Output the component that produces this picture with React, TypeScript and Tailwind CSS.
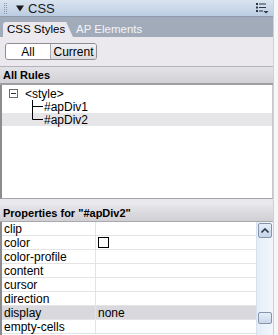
import React from 'react'

const props = [
  { name: 'clip', value: '' },
  { name: 'color', value: 'swatch' },
  { name: 'color-profile', value: '' },
  { name: 'content', value: '' },
  { name: 'cursor', value: '' },
  { name: 'direction', value: '' },
  { name: 'display', value: 'none', selected: true },
  { name: 'empty-cells', value: '' },
]

const Grip = () => (
  <svg width="4" height="11" viewBox="0 0 4 11" className="shrink-0">
    {[0, 2, 4, 6, 8, 10].map(y => (
      <g key={y}>
        <rect x="0" y={y} width="1" height="1" fill="#8a97a8" />
        <rect x="2" y={y} width="1" height="1" fill="#8a97a8" />
      </g>
    ))}
  </svg>
)

const OptionsIcon = () => (
  <svg width="13" height="11" viewBox="0 0 13 11">
    <rect x="0" y="0" width="2" height="2" fill="#2b3544" />
    <rect x="3" y="0.5" width="7" height="1" fill="#2b3544" />
    <rect x="0" y="3.5" width="2" height="2" fill="#2b3544" />
    <rect x="3" y="4" width="7" height="1" fill="#2b3544" />
    <rect x="0" y="7" width="2" height="2" fill="#2b3544" />
    <rect x="3" y="7.5" width="4" height="1" fill="#2b3544" />
    <path d="M7.5 8 L12.5 8 L10 10.5 Z" fill="#2b3544" />
  </svg>
)

export default function App() {
  return (
    <div className="w-[278px] h-[335px] bg-white flex overflow-hidden font-['Liberation_Sans',sans-serif] text-[11px] text-black leading-none whitespace-nowrap">
      <div className="w-[273px] flex flex-col">
        {/* panel title */}
        <div className="h-[17px] shrink-0 flex items-center pl-[4px] pr-[4px] bg-gradient-to-b from-[#dae4f0] to-[#bccde2] border-b border-[#8e9bae]">
          <Grip />
          <svg width="8" height="7" viewBox="0 0 8 7" className="ml-[8px] shrink-0">
            <path d="M0 0.5 H8 L4 6.5 Z" fill="#1a1a1a" />
          </svg>
          <span className="ml-[4px] text-[13px] text-[#1a1a1a]">CSS</span>
          <div className="ml-auto mt-[1px]"><OptionsIcon /></div>
        </div>

        {/* tabs */}
        <div className="h-[20px] shrink-0 flex items-end bg-[#a1abba] pl-[3px]">
          <div className="h-[15px] w-[63px] shrink-0 flex items-center pl-[4px] bg-[#ebe9ed] rounded-tl-[3px] text-[11.5px] relative">
            CSS Styles
            <div className="absolute right-[-7px] top-0 h-full w-[8px] bg-[#ebe9ed] [clip-path:polygon(0_0,15%_0,100%_100%,0_100%)]" />
          </div>
          <div className="h-[15px] ml-[10px] flex items-center text-[11.5px] text-[#f4f4f6]">AP Elements</div>
        </div>

        {/* All / Current */}
        <div className="h-[30px] shrink-0 flex items-center px-[5px] bg-[#ebe9ed] border-b border-[#b4b3b8]">
          <div className="flex h-[17px] border border-[#8d8d92] rounded-[3px] overflow-hidden text-[12px]">
            <div className="w-[45px] flex items-center justify-center bg-white border-r border-[#a8a8ac]">All</div>
            <div className="w-[45px] flex items-center justify-center bg-gradient-to-b from-[#f1f0f2] to-[#dcdbde]">Current</div>
          </div>
        </div>

        {/* All Rules header */}
        <div className="h-[18px] shrink-0 flex items-center pl-[3px] font-bold bg-gradient-to-b from-[#e3e2e6] to-[#d2d1d5] border-b-2 border-[#9e9ea3]">
          All Rules
        </div>

        {/* rules tree */}
        <div className="h-[114px] shrink-0 bg-white border-l-2 border-r border-b border-l-[#8c8c90] border-r-[#c8c8cc] border-b-[#a6a6aa] pt-[2px] text-[12px]">
          <div className="h-[13px] flex items-center pl-[7px]">
            <div className="w-[9px] h-[9px] border border-[#6e6e6e] flex items-center justify-center">
              <div className="w-[5px] h-[1px] bg-[#333]" />
            </div>
            <span className="ml-[7px]">&lt;style&gt;</span>
          </div>
          <div className="h-[13px] flex items-center pl-[30px]">
            <svg width="12" height="13" viewBox="0 0 12 13" className="shrink-0">
              <path d="M0.5 0 V13 M0.5 6.5 H11" stroke="#000" strokeWidth="1" />
            </svg>
            <span>#apDiv1</span>
          </div>
          <div className="h-[13px] flex items-center pl-[30px] bg-[#e6e6e8]">
            <svg width="12" height="13" viewBox="0 0 12 13" className="shrink-0">
              <path d="M0.5 0 V6.5 H11" stroke="#000" strokeWidth="1" fill="none" />
            </svg>
            <span>#apDiv2</span>
          </div>
        </div>

        <div className="h-[6px] shrink-0 bg-[#e9e8ec]" />

        {/* Properties header */}
        <div className="h-[17px] shrink-0 flex items-center pl-[3px] font-bold bg-gradient-to-b from-[#e6e5e9] to-[#d0cfd3] border-b border-[#a9a9ad]">
          Properties for "#apDiv2"
        </div>

        {/* property grid */}
        <div className="flex-1 flex border-l-2 border-[#8c8c90] overflow-hidden">
          <div className="flex-1 flex flex-col text-[12px]">
            {props.map(p => (
              <div key={p.name} className={`h-[14px] shrink-0 flex border-b border-[#e4e4e6] ${p.selected ? 'bg-[#d9d8dc]' : 'bg-white'}`}>
                <div className="w-[94px] pl-[2px] flex items-center border-r border-[#e4e4e6]">{p.name}</div>
                <div className="flex-1 pl-[2px] flex items-center">
                  {p.value === 'swatch' ? (
                    <div className="w-[11px] h-[11px] border border-black bg-white" />
                  ) : (
                    p.value
                  )}
                </div>
              </div>
            ))}
          </div>
          {/* scrollbar */}
          <div className="w-[17px] shrink-0 flex flex-col bg-gradient-to-r from-[#e4edf8] to-[#f3f7fc] border-l border-[#d8e2ee] pt-[1px]">
            <div className="h-[15px] mx-[1px] flex items-center justify-center border border-[#8595ad] rounded-[2px] bg-gradient-to-b from-[#e6eef8] to-[#c5d4e8]">
              <svg width="8" height="5" viewBox="0 0 8 5">
                <path d="M0.5 4.5 L4 1 L7.5 4.5" stroke="#2c3a52" strokeWidth="1.6" fill="none" />
              </svg>
            </div>
            <div className="flex-1" />
            <div className="h-[12px] mx-[1px] mb-[11px] border border-[#8595ad] rounded-[2px] bg-gradient-to-b from-[#e6eef8] to-[#cbd8ea]" />
          </div>
        </div>
      </div>
      <div className="w-[5px] bg-[#f7f7f8] border-l border-[#d0d0d4]" />
    </div>
  )
}
